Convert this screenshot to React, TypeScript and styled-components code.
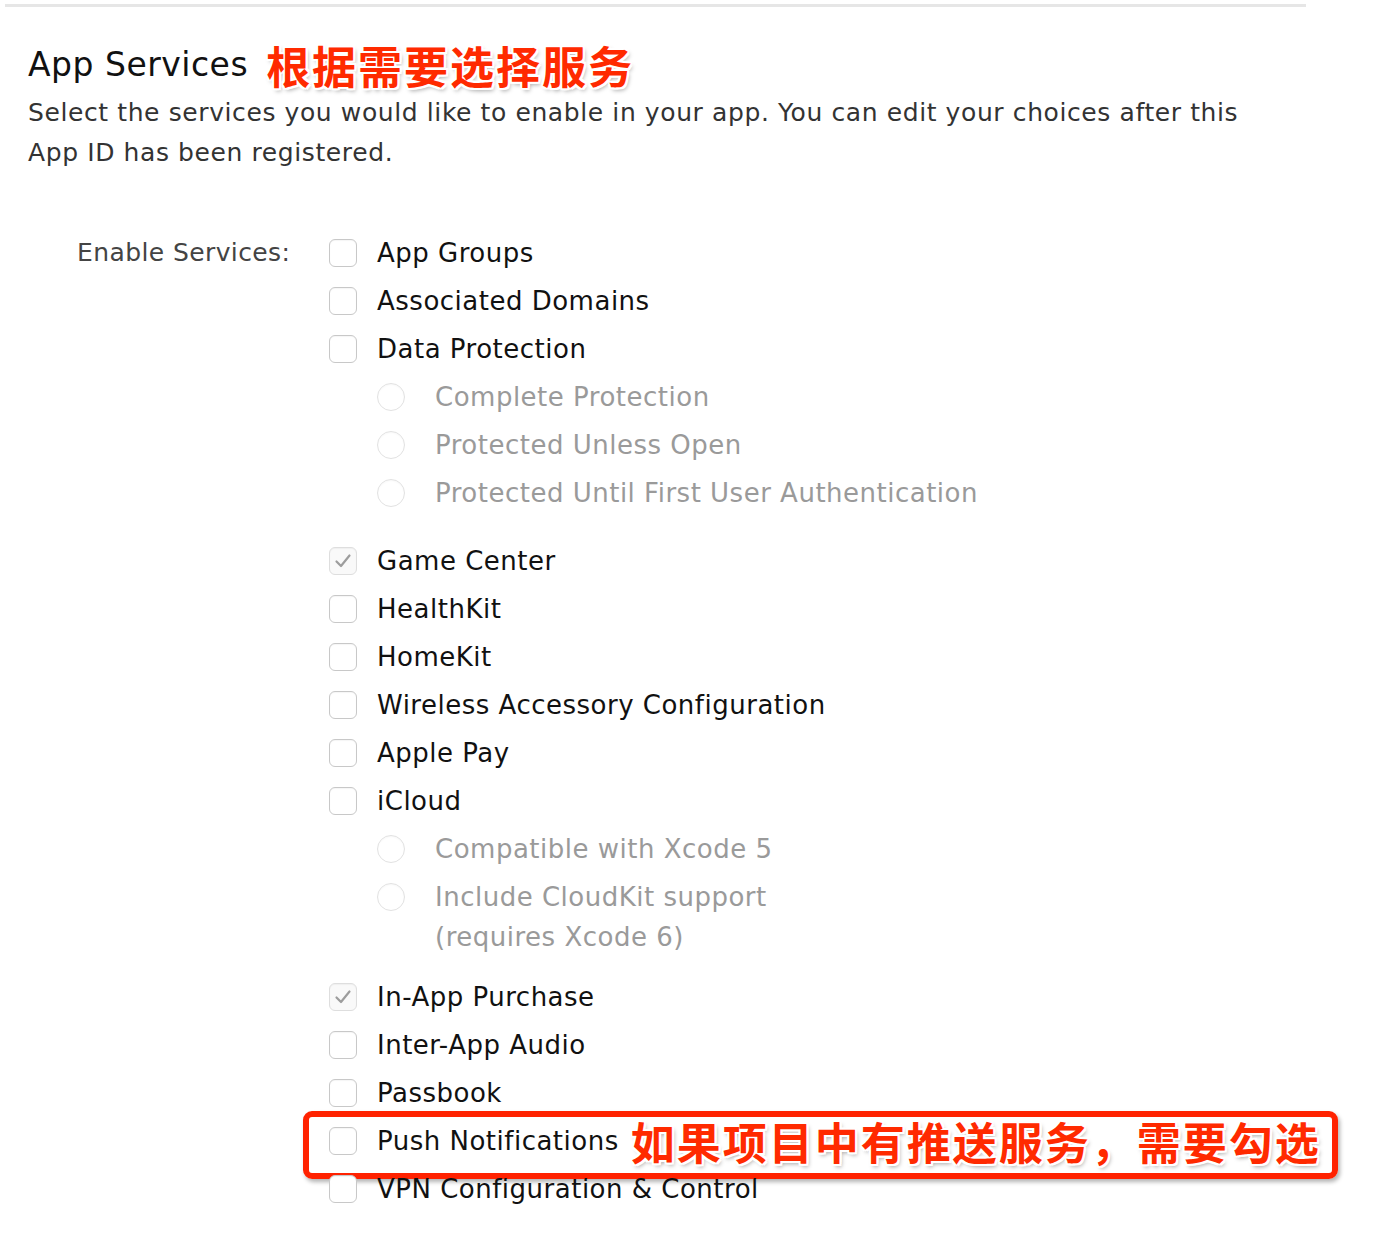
import React from "react";
import styled, { createGlobalStyle } from "styled-components";

const Global = createGlobalStyle`
  html, body { margin: 0; padding: 0; background: #ffffff; }
  body { font-family: "DejaVu Sans", "Noto Sans CJK SC", sans-serif; color: #111; }
`;

const Page = styled.div`
  width: 1382px;
  min-height: 1248px;
  box-sizing: border-box;
  padding: 4px 0 0 0;
`;

const TopRule = styled.div`
  margin-left: 5px;
  width: 1301px;
  height: 3px;
  background: #e6e6e6;
`;

const Content = styled.div`
  padding: 34px 0 0 28px;
`;

const HeadingRow = styled.div`
  display: flex;
  align-items: center;
  height: 48px;
`;

const Heading = styled.h2`
  margin: 0;
  font-family: "DejaVu Sans", sans-serif;
  font-weight: normal;
  font-size: 33px;
  letter-spacing: 0.5px;
  color: #111;
  line-height: 48px;
`;

const Annotation = styled.span<{ $ml: number }>`
  margin-left: ${(p) => p.$ml}px;
  font-family: "Noto Sans CJK SC", "Noto Sans CJK TC", sans-serif;
  font-weight: 700;
  font-size: 44px;
  letter-spacing: 2px;
  line-height: 48px;
  color: #ff2a00;
  white-space: nowrap;
  text-shadow:
    -2px -2px 0 #fff, 2px -2px 0 #fff, -2px 2px 0 #fff, 2px 2px 0 #fff,
    0 -2px 0 #fff, 0 2px 0 #fff, -2px 0 0 #fff, 2px 0 0 #fff,
    2px 3px 4px rgba(0, 0, 0, 0.35);
`;

const Description = styled.p`
  margin: 4px 0 0 0;
  width: 1250px;
  font-size: 25px;
  line-height: 40px;
  letter-spacing: 0.6px;
  color: #333;
`;

const Form = styled.div`
  display: grid;
  grid-template-columns: 252px 1fr;
  margin: 56px 0 0 49px;
`;

const FieldLabel = styled.div`
  font-size: 25px;
  letter-spacing: 0.4px;
  line-height: 48px;
  color: #444;
`;

const Options = styled.div`
  display: flex;
  flex-direction: column;
`;

const Row = styled.div`
  position: relative;
  display: flex;
  align-items: center;
  height: 48px;
`;

const Box = styled.span<{ $checked?: boolean }>`
  flex: none;
  box-sizing: border-box;
  width: 28px;
  height: 28px;
  border-radius: 6px;
  border: 1px solid ${(p) => (p.$checked ? "#dedede" : "#c8c8c8")};
  background: ${(p) => (p.$checked ? "#f9f9f9" : "#fff")};
  box-shadow: inset 0 1px 1px rgba(0, 0, 0, 0.04);
  display: flex;
  align-items: center;
  justify-content: center;
`;

const Label = styled.span`
  margin-left: 20px;
  font-size: 26px;
  letter-spacing: 0.5px;
  color: #111;
  white-space: nowrap;
`;

const RadioGroup = styled.div<{ $after: number }>`
  display: flex;
  flex-direction: column;
  padding-left: 48px;
  margin-bottom: ${(p) => p.$after}px;
`;

const RadioRow = styled.div`
  display: flex;
  align-items: flex-start;
  padding: 4px 0;
`;

const Circle = styled.span`
  flex: none;
  box-sizing: border-box;
  width: 28px;
  height: 28px;
  margin-top: 6px;
  border-radius: 50%;
  border: 1px solid #e2e2e2;
  background: #fff;
  box-shadow: inset 0 1px 2px rgba(0, 0, 0, 0.03);
`;

const RadioLabel = styled.span`
  margin-left: 30px;
  font-size: 26px;
  letter-spacing: 0.5px;
  line-height: 40px;
  color: #9a9a9a;
  white-space: nowrap;
`;

const Highlight = styled.div`
  position: absolute;
  left: -26px;
  top: -6px;
  width: 1035px;
  height: 68px;
  box-sizing: border-box;
  border: 6px solid #ff2200;
  border-radius: 9px;
  box-shadow: 2px 3px 4px rgba(0, 0, 0, 0.3);
  pointer-events: none;
`;

const Check = () => (
  <svg width="18" height="16" viewBox="0 0 18 16">
    <path d="M2.5 8.5 L7 13 L15.5 2.5" fill="none" stroke="#9d9d9d" strokeWidth="2.2" strokeLinecap="round" strokeLinejoin="round" />
  </svg>
);

type Item = {
  label: string;
  checked?: boolean;
  radios?: string[][];
  after?: number;
  note?: boolean;
};

const items: Item[] = [
  { label: "App Groups" },
  { label: "Associated Domains" },
  {
    label: "Data Protection",
    radios: [["Complete Protection"], ["Protected Unless Open"], ["Protected Until First User Authentication"]],
    after: 20,
  },
  { label: "Game Center", checked: true },
  { label: "HealthKit" },
  { label: "HomeKit" },
  { label: "Wireless Accessory Configuration" },
  { label: "Apple Pay" },
  {
    label: "iCloud",
    radios: [["Compatible with Xcode 5"], ["Include CloudKit support", "(requires Xcode 6)"]],
    after: 12,
  },
  { label: "In-App Purchase", checked: true },
  { label: "Inter-App Audio" },
  { label: "Passbook" },
  { label: "Push Notifications", note: true },
  { label: "VPN Configuration & Control" },
];

export default function App() {
  return (
    <Page>
      <Global />
      <TopRule />
      <Content>
        <HeadingRow>
          <Heading>App Services</Heading>
          <Annotation $ml={18}>根据需要选择服务</Annotation>
        </HeadingRow>
        <Description>
          Select the services you would like to enable in your app. You can edit your choices after this App ID has been registered.
        </Description>
        <Form>
          <FieldLabel>Enable Services:</FieldLabel>
          <Options>
            {items.map((it) => (
              <React.Fragment key={it.label}>
                <Row>
                  <Box $checked={it.checked}>{it.checked && <Check />}</Box>
                  <Label>{it.label}</Label>
                  {it.note && (
                    <>
                      <Annotation $ml={12}>如果项目中有推送服务，需要勾选</Annotation>
                      <Highlight />
                    </>
                  )}
                </Row>
                {it.radios && (
                  <RadioGroup $after={it.after ?? 20}>
                    {it.radios.map((lines) => (
                      <RadioRow key={lines[0]}>
                        <Circle />
                        <RadioLabel>
                          {lines.map((l, i) => (
                            <React.Fragment key={l}>
                              {i > 0 && <br />}
                              {l}
                            </React.Fragment>
                          ))}
                        </RadioLabel>
                      </RadioRow>
                    ))}
                  </RadioGroup>
                )}
              </React.Fragment>
            ))}
          </Options>
        </Form>
      </Content>
    </Page>
  );
}
